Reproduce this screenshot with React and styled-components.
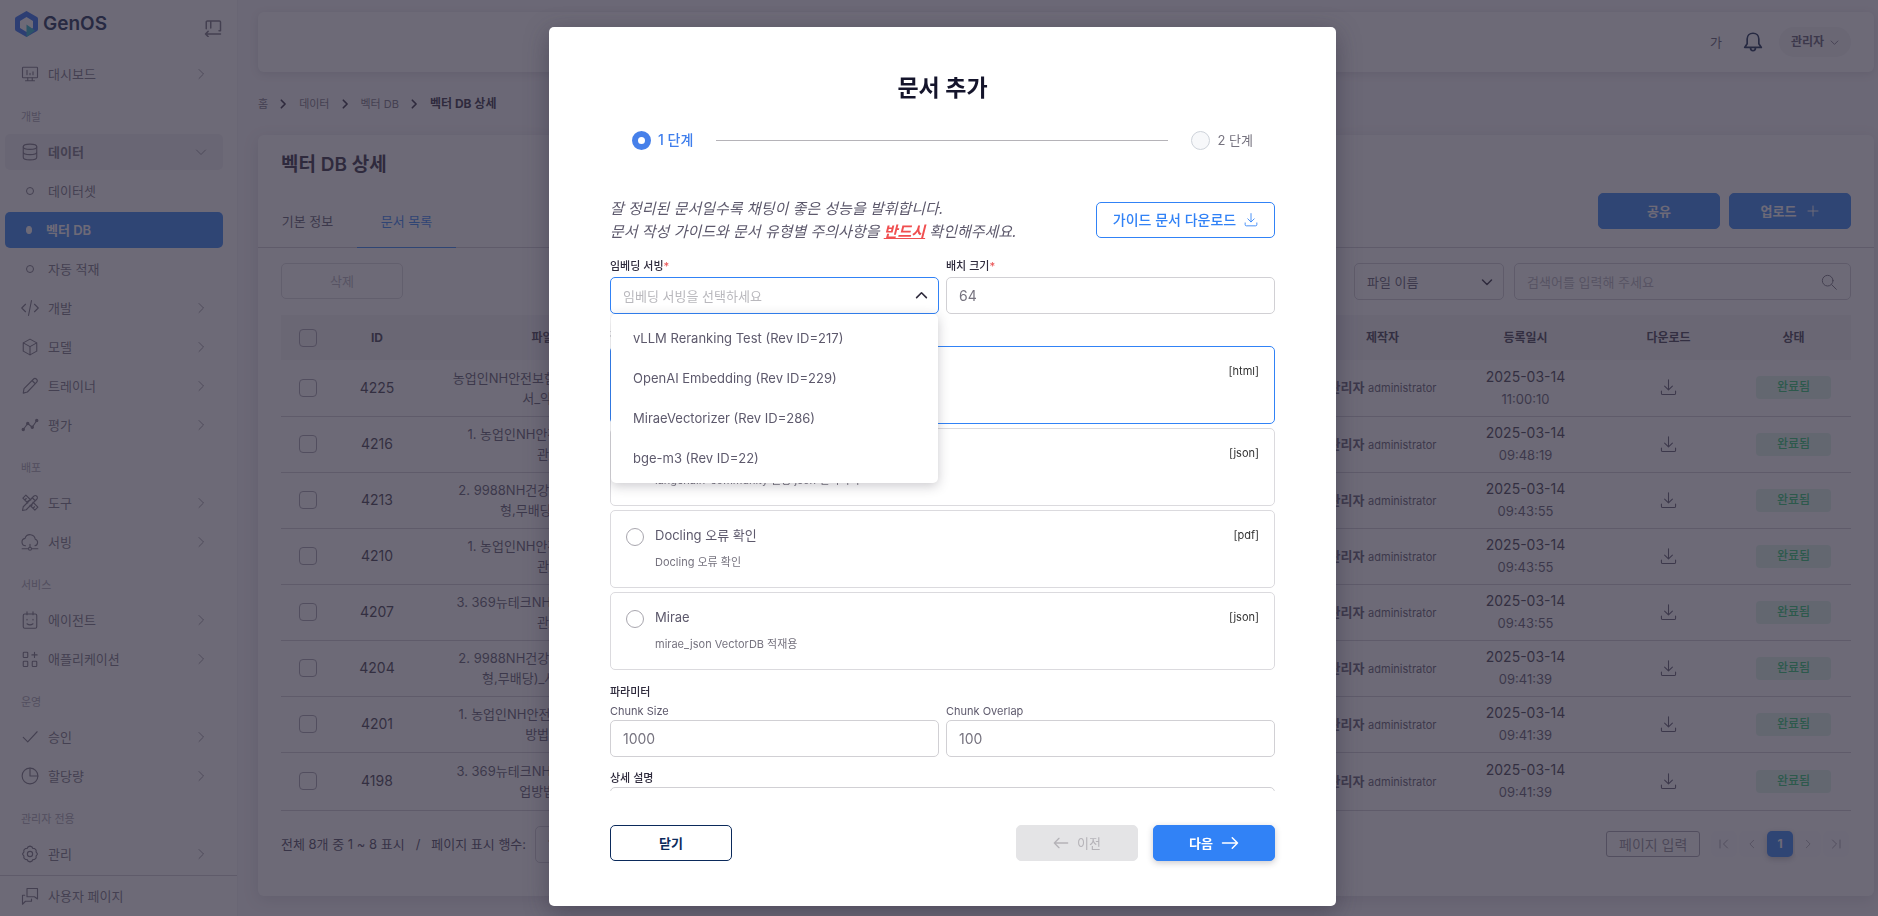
import React, { useState } from "react";
import styled, { createGlobalStyle } from "styled-components";

const GlobalStyle = createGlobalStyle`
  * {
    box-sizing: border-box;
  }
  body {
    margin: 0;
    background: #f8f7fa;
    color: #5d596c;
    font-family: Inter, "Noto Sans CJK KR", sans-serif;
    font-size: 13px;
    line-height: 20px;
  }
  button, input, select, textarea {
    font-family: inherit;
    font-size: 13px;
    line-height: 20px;
    color: inherit;
  }
  button {
    cursor: pointer;
  }
  a {
    color: inherit;
    text-decoration: none;
  }
  h1, h2, p, ul, ol, fieldset, legend {
    margin: 0;
    padding: 0;
    border: 0;
    list-style: none;
  }
`;

/* icons */

const Svg = styled.svg`
  flex: none;
  width: ${props => props.$size || 18}px;
  height: ${props => props.$size || 18}px;
  fill: none;
  stroke: currentColor;
  stroke-width: ${props => props.$stroke || 1.5};
  stroke-linecap: round;
  stroke-linejoin: round;
`;

const shapes = {
  dashboard: (
    <>
      <rect x="2" y="3" width="20" height="14" rx="1" />
      <path d="M9 17v4M15 17v4M6 21h12M8 7v6M12 11v2M16 9v4" />
    </>
  ),
  data: (
    <>
      <ellipse cx="12" cy="5" rx="9" ry="3.5" />
      <path d="M3 5v14c0 2 4 3.500 9 3.500s9-1.500 9-3.500V5M3 12c0 2 4 3.500 9 3.500s9-1.500 9-3.500" />
    </>
  ),
  code: <path d="M6 7l-5 5 5 5M18 7l5 5-5 5M14 2l-4 20" />,
  box: (
    <path d="M12 1.500l9 5v11l-9 5-9-5v-11zM3 6.500l9 5 9-5M12 11.500v11" />
  ),
  pencil: (
    <path d="M3 21.500l1-6L16.500 3a2.600 2.600 0 0 1 4.200 4.200L8.500 20zM15 5l4 4" />
  ),
  trend: (
    <>
      <path d="M3 18l6-8 6 5 6-9" />
      <g fill="currentColor">
        <circle cx="3" cy="18" r="1.500" />
        <circle cx="9" cy="10" r="1.500" />
        <circle cx="15" cy="15" r="1.500" />
        <circle cx="21" cy="6" r="1.500" />
      </g>
    </>
  ),
  tools: (
    <>
      <path d="M2 22l1-5L17 3a2.500 2.500 0 0 1 4 4L7 21zM15 5l4 4" />
      <path d="M9 12L2.500 5.500l4-4L13 8M16 11l6.500 6.500-4 4L12 15M5 8l2-2M8 11l2-2M16 19l2-2M13.500 16l1.500-1.500" />
    </>
  ),
  cloud: (
    <>
      <path d="M6 17a5 5 0 0 1-.6-9.900A7 7 0 0 1 19 8.300 4.500 4.500 0 0 1 18.500 17M12 15v4M1.500 21h8M14.500 21h8" />
      <circle cx="12" cy="21" r="2" />
    </>
  ),
  agent: (
    <>
      <rect x="3" y="4" width="18" height="19" rx="2" />
      <path d="M8 1v4M16 1v4M8 11v1M16 11v1M8 17q4 3 8 0" />
    </>
  ),
  apps: (
    <>
      <rect x="3" y="3" width="6" height="7" rx="1" />
      <rect x="3" y="15" width="6" height="7" rx="1" />
      <rect x="15" y="15" width="6" height="7" rx="1" />
      <path d="M18 3v7M14.500 6.500h7" />
    </>
  ),
  check: <path d="M3 12.500l6 6L21.500 5" />,
  pie: (
    <>
      <circle cx="12" cy="12" r="10.500" />
      <path d="M12 1.500V12h10.500" />
    </>
  ),
  gear: (
    <>
      <path d="M12 1.500l2.600 1 1.200 2 2.400.2 2 2-.1 2.500 1.900 2.800-1.900 2.800.1 2.500-2 2-2.400.2-1.200 2-2.600 1-2.600-1-1.200-2-2.400-.2-2-2 .1-2.500L2 12l1.900-2.800-.1-2.500 2-2 2.400-.2 1.200-2z" />
      <circle cx="12" cy="12" r="3.500" />
    </>
  ),
  chat: (
    <path d="M8 2h14v14l-4-3H8zM5 11H2v12l4-4h8v-3" />
  ),
  collapse: (
    <path d="M3 13V4a1.500 1.500 0 0 1 1.500-1.500h16A1.500 1.500 0 0 1 22 4v11.500h-2M9 3v9M22 20H2M5.500 16.500L2 20l3.500 3.500" />
  ),
  bell: (
    <path d="M12 1.500c-4 0-7 3-7 7V14l-3 4.500h20L19 14V8.500c0-4-3-7-7-7zM9 19c0 2 1 3.500 3 3.500s3-1.500 3-3.500" />
  ),
  download: <path d="M12 1v14M6.500 10l5.500 5.500L17.500 10M2 17v3a2 2 0 0 0 2 2h16a2 2 0 0 0 2-2v-3" />,
  right: <path d="M8 3l9 9-9 9" />,
  left: <path d="M16 3l-9 9 9 9" />,
  down: <path d="M3 8l9 9 9-9" />,
  up: <path d="M3 16l9-9 9 9" />,
  first: <path d="M4 4v16M19 4l-8 8 8 8" />,
  last: <path d="M20 4v16M5 4l8 8-8 8" />,
  plus: <path d="M12 2v20M2 12h20" />,
  search: (
    <>
      <circle cx="10" cy="10" r="8" />
      <path d="M16 16l7 7" />
    </>
  ),
  arrowRight: <path d="M2 12h20M15 5l7 7-7 7" />,
  arrowLeft: <path d="M22 12H2M9 5l-7 7 7 7" />
};

const Icon = ({ name, size, stroke, className }) => (
  <Svg
    viewBox="0 0 24 24"
    $size={size}
    $stroke={stroke}
    className={className}
    aria-hidden="true"
  >
    {shapes[name]}
  </Svg>
);

/* sidebar */

const Page = styled.div`
  display: flex;
  height: 100vh;
  overflow: hidden;
`;

const Sidebar = styled.aside`
  display: flex;
  flex-direction: column;
  width: 238px;
  flex: none;
  background: #fff;
  border-right: 1px solid #f1f0f3;
  color: #76737f;
`;

const Brand = styled.div`
  display: flex;
  align-items: flex-end;
  justify-content: space-between;
  height: 37px;
  padding: 0 15px;
`;

const Logo = styled.a`
  display: flex;
  align-items: center;
  gap: 5px;
  color: #14284f;
  font-size: 19px;
  line-height: 26px;
  font-weight: 600;
`;

const LogoMark = styled.svg`
  width: 23px;
  height: 26px;
`;

const IconButton = styled.button`
  display: flex;
  align-items: center;
  justify-content: center;
  padding: 0;
  border: 0;
  background: none;
`;

const Menu = styled.nav`
  display: flex;
  flex-direction: column;
  gap: 3px;
  flex: 1;
  padding: 19px 14px 0 5px;
`;

const MenuLabel = styled.span`
  padding: 14px 16px 6px;
  font-size: 11px;
  line-height: 16px;
  color: #a5a2ad;
`;

const MenuItem = styled.a`
  display: flex;
  align-items: center;
  gap: 9px;
  height: 36px;
  padding: 0 16px;
  border-radius: 5px;
  background: ${props =>
    props.$active ? "#3182f6" : props.$open ? "#f2f1f4" : "none"};
  color: ${props => (props.$active ? "#fff" : "inherit")};
  font-weight: ${props => (props.$active || props.$open ? 600 : 400)};
`;

const MenuText = styled.span`
  flex: 1;
`;

const Bullet = styled.span`
  width: ${props => (props.$filled ? 6 : 8)}px;
  height: 8px;
  margin: 0 5px;
  border-radius: 50%;
  border: 1px solid currentColor;
  background: ${props => (props.$filled ? "currentColor" : "none")};
`;

const UserPage = styled.a`
  display: flex;
  align-items: center;
  gap: 9px;
  height: 41px;
  padding: 0 21px;
  border-top: 1px solid #cfcdd4;
`;

/* content */

const Main = styled.main`
  flex: 1;
  min-width: 0;
  display: flex;
  flex-direction: column;
  padding: 12px 4px 20px 20px;
`;

const TopBar = styled.header`
  display: flex;
  align-items: center;
  justify-content: flex-end;
  gap: 21px;
  height: 60px;
  flex: none;
  padding: 0 23px;
  border-radius: 6px;
  background: #fff;
  box-shadow: 0 2px 8px rgba(47, 43, 61, 0.14);
`;

const TopActions = styled.div`
  display: flex;
  align-items: center;
  gap: 16px;
  color: #14284f;
`;

const UserButton = styled.button`
  display: flex;
  align-items: center;
  gap: 6px;
  height: 30px;
  padding: 0 12px;
  border: 0;
  border-radius: 15px;
  background: #f4f3f6;
  font-size: 12px;
  font-weight: 600;
  color: #5d596c;
`;

const Breadcrumb = styled.ol`
  display: flex;
  align-items: center;
  gap: 10px;
  height: 63px;
  font-size: 11px;
  color: #76737f;
`;

const Crumb = styled.li`
  display: flex;
  align-items: center;
  gap: 11px;
  &:last-child {
    font-size: 12px;
    font-weight: 700;
    color: #2f2b3d;
  }
`;

const CrumbIcon = styled(Icon)`
  color: #2f2b3d;
`;

const Card = styled.section`
  flex: 1;
  display: flex;
  flex-direction: column;
  border-radius: 6px;
  background: #fff;
  box-shadow: 0 4px 16px rgba(47, 43, 61, 0.14);
`;

const Title = styled.h1`
  padding: 16px 23px 0;
  font-size: 19px;
  line-height: 28px;
  font-weight: 600;
  color: #2f2b3d;
`;

const TabBar = styled.div`
  display: flex;
  align-items: flex-end;
  justify-content: space-between;
  height: 69px;
  border-bottom: 1px solid #cfcdd4;
`;

const Tabs = styled.div`
  display: flex;
`;

const Tab = styled.button`
  min-width: 99px;
  height: 54px;
  margin-bottom: -1px;
  padding: 0 23px;
  border: 0;
  border-bottom: 1px solid ${props => (props.$active ? "#3182f6" : "transparent")};
  background: none;
  color: ${props => (props.$active ? "#3182f6" : "#5d596c")};
`;

const Actions = styled.div`
  display: flex;
  gap: 9px;
  padding: 0 23px 18px;
`;

const Button = styled.button`
  display: flex;
  align-items: center;
  justify-content: center;
  gap: ${props => props.$gap || 8}px;
  width: 122px;
  height: 36px;
  border: 1px solid ${props => props.$border || "#3182f6"};
  border-radius: 5px;
  background: ${props => props.$bg || "#3182f6"};
  color: ${props => props.$color || "#fff"};
  font-weight: ${props => props.$weight || 600};
  box-shadow: ${props => (props.$raised ? "0 2px 6px rgba(47, 43, 61, 0.25)" : "none")};
`;

const Filters = styled.div`
  display: flex;
  gap: 10px;
  padding: 15px 23px;
`;

const Spacer = styled.span`
  flex: 1;
`;

const Picker = styled.span`
  display: flex;
  align-items: center;
  width: ${props => props.$width}px;
  height: 37px;
  border: 1px solid #cfcdd4;
  border-radius: 5px;
  padding-right: 10px;
  color: #2f2b3d;
`;

const Select = styled.select`
  flex: 1;
  min-width: 0;
  height: 100%;
  padding: 0 12px;
  border: 0;
  appearance: none;
  background: none;
  color: #5d596c;
`;

const SearchBox = styled(Picker)`
  padding-right: 13px;
  color: #76737f;
`;

const SearchInput = styled.input`
  flex: 1;
  min-width: 0;
  padding: 0 12px;
  border: 0;
  background: none;
  outline: none;
  &::placeholder {
    color: #b5b3bc;
  }
`;

const TableWrap = styled.div`
  padding: 0 23px;
`;

const Table = styled.table`
  width: 100%;
  table-layout: fixed;
  border-collapse: collapse;
  text-align: center;
`;

const Th = styled.th`
  width: ${props => (props.$width ? `${props.$width}px` : "auto")};
  height: 45px;
  padding: 0;
  background: #f4f3f6;
  font-size: 12px;
  font-weight: 700;
  color: #3f3b4c;
`;

const Tr = styled.tr`
  height: 56px;
  border-bottom: 1px solid #cfcdd4;
  &:last-child {
    height: 58px;
  }
`;

const Td = styled.td`
  padding: 0;
  white-space: pre-line;
`;

const Checkbox = styled.input`
  display: block;
  width: 18px;
  height: 18px;
  margin: 0 auto;
  appearance: none;
  border: 1px solid #a5a2ad;
  border-radius: 4px;
`;

const RowId = styled.span`
  font-size: 14px;
  color: #3f3b4c;
`;

const Login = styled.span`
  font-size: 11px;
`;

const DateText = styled.span`
  display: block;
  font-size: 14px;
  line-height: 22px;
  color: #3f3b4c;
`;

const TimeText = styled(DateText)`
  font-size: 13px;
  color: #5d596c;
`;

const DownloadButton = styled(IconButton)`
  margin: 0 auto;
`;

const Status = styled.span`
  display: inline-block;
  width: 75px;
  height: 23px;
  border-radius: 4px;
  background: #dcf6e8;
  color: #28c76f;
  font-size: 12px;
  line-height: 22px;
  font-weight: 500;
`;

const Footer = styled.div`
  display: flex;
  align-items: center;
  padding: 15px 25px 0 23px;
  color: #4b465c;
`;

const RowCount = styled.label`
  display: flex;
  align-items: center;
  gap: 9px;
`;

const Pager = styled.div`
  display: flex;
  align-items: center;
  gap: 2px;
`;

const PageInput = styled.input`
  width: 94px;
  height: 26px;
  margin-right: 9px;
  padding: 0 12px;
  border: 1px solid #a5a2ad;
  border-radius: 3px;
  background: none;
  font-size: 14px;
  &::placeholder {
    color: #8f8c98;
  }
`;

const PageButton = styled(IconButton)`
  width: 26px;
  height: 26px;
  border-radius: 5px;
  background: ${props => (props.$active ? "#3182f6" : "#fcfcfd")};
  color: ${props => (props.$active ? "#fff" : "#a5a2ad")};
  font-size: 12px;
  font-weight: 700;
  box-shadow: ${props => (props.$active ? "0 2px 6px rgba(47, 43, 61, 0.3)" : "none")};
`;

/* modal */

const Overlay = styled.div`
  position: fixed;
  inset: 0;
  display: flex;
  justify-content: center;
  padding: 27px 0 10px 7px;
  background: rgba(47, 43, 61, 0.7);
`;

const Modal = styled.div`
  display: flex;
  flex-direction: column;
  width: 100%;
  max-width: 787px;
  padding: 45px 61px;
  border-radius: 5px;
  background: #fff;
  box-shadow: 0 6px 24px rgba(47, 43, 61, 0.45);
`;

const ModalTitle = styled.h2`
  font-size: 23px;
  line-height: 32px;
  font-weight: 700;
  text-align: center;
  color: #14142b;
`;

const Steps = styled.ol`
  display: flex;
  align-items: center;
  gap: 23px;
  padding: 26px 22px 0;
`;

const Step = styled.li`
  display: flex;
  align-items: center;
  gap: 7px;
  font-size: ${props => (props.$active ? 14 : 13)}px;
  font-weight: ${props => (props.$active ? 500 : 400)};
  color: ${props => (props.$active ? "#3f7eec" : "#76737f")};
`;

const StepDot = styled.span`
  width: 19px;
  height: 19px;
  border-radius: 50%;
  border: ${props => (props.$active ? "6px solid #4680ea" : "1px solid #ced3da")};
  background: ${props => (props.$active ? "#fff" : "#f7f8fa")};
`;

const StepLine = styled.li`
  flex: 1;
  height: 1px;
  background: #b5b3b8;
`;

const Intro = styled.div`
  display: flex;
  align-items: center;
  justify-content: space-between;
  margin-top: 47px;
`;

const IntroText = styled.p`
  font-size: 15px;
  line-height: 23px;
  font-style: italic;
  color: #5d596c;
`;

const Must = styled.strong`
  font-weight: 700;
  color: #f04f50;
  text-decoration: underline;
`;

const GuideButton = styled(Button)`
  width: 179px;
  font-size: 14px;
`;

const Body = styled.div`
  flex: 1;
  min-height: 0;
  overflow: hidden;
  margin-top: 12px;
`;

const Fields = styled.div`
  display: grid;
  grid-template-columns: 1fr 1fr;
  gap: 7px;
`;

const Field = styled.div`
  position: relative;
`;

const Label = styled.label`
  display: block;
  font-size: 11px;
  line-height: ${props => (props.$short ? 18 : 22)}px;
  font-weight: ${props => (props.$plain ? 400 : 500)};
  color: ${props => (props.$plain ? "#5d596c" : "#2f2b3d")};
`;

const Legend = styled.legend`
  font-size: 11px;
  line-height: 20px;
  font-weight: 500;
  color: #2f2b3d;
`;

const Required = styled.span`
  color: #ea5455;
`;

const Control = styled.div`
  display: flex;
  align-items: center;
  height: 37px;
  padding-right: 10px;
  border: 1px solid ${props => (props.$focused ? "#3182f6" : "#d1d0d4")};
  border-radius: 5px;
  color: #2f2b3d;
`;

const Input = styled.input`
  flex: 1;
  min-width: 0;
  padding: 0 12px;
  border: 0;
  outline: none;
  background: none;
  font-size: ${props => (props.$list ? 13 : 14)}px;
  color: #76737f;
  &::placeholder {
    color: #b9b8bd;
  }
`;

const Options = styled.ul`
  position: absolute;
  z-index: 2;
  top: 100%;
  left: 1px;
  right: 1px;
  padding: 4px 0 5px;
  border-radius: 5px;
  background: #fff;
  box-shadow: 0 3px 12px rgba(47, 43, 61, 0.25);
`;

const Option = styled.li`
  padding: 0 22px;
  font-size: 13px;
  line-height: 40px;
  height: 40px;
  color: #5d596c;
`;

const Group = styled.fieldset`
  margin-top: 12px;
`;

const Choices = styled.div`
  display: grid;
  gap: 4px;
`;

const Choice = styled.label`
  display: flex;
  gap: 11px;
  height: 78px;
  padding: 14px 15px 0;
  border: 1px solid ${props => (props.$checked ? "#3182f6" : "#dbdade")};
  border-radius: 5px;
`;

const Radio = styled.input`
  width: 18px;
  height: 18px;
  margin: 3px 0 0;
  appearance: none;
  border: ${props => (props.checked ? "5px solid #3182f6" : "1px solid #a8a6ae")};
  border-radius: 50%;
`;

const ChoiceText = styled.span`
  flex: 1;
`;

const ChoiceName = styled.span`
  display: block;
  font-size: 13px;
  color: #5d596c;
`;

const ChoiceInfo = styled.span`
  display: block;
  padding-top: 7px;
  font-size: 11px;
  color: #76737f;
`;

const FileType = styled.span`
  font-size: 11px;
  color: #333;
`;

const Memo = styled.textarea`
  display: block;
  width: 100%;
  height: 96px;
  border: 1px solid #d1d0d4;
  border-radius: 5px;
  resize: none;
`;

const ModalFooter = styled.div`
  display: flex;
  gap: 15px;
  margin-top: 34px;
`;

const menu = [
  { icon: "dashboard", text: "대시보드" },
  { label: "개발" },
  { icon: "data", text: "데이터", open: true },
  { bullet: true, text: "데이터셋" },
  { bullet: true, text: "벡터 DB", active: true },
  { bullet: true, text: "자동 적재" },
  { icon: "code", text: "개발" },
  { icon: "box", text: "모델" },
  { icon: "pencil", text: "트레이너" },
  { icon: "trend", text: "평가" },
  { label: "배포" },
  { icon: "tools", text: "도구" },
  { icon: "cloud", text: "서빙" },
  { label: "서비스" },
  { icon: "agent", text: "에이전트" },
  { icon: "apps", text: "애플리케이션" },
  { label: "운영" },
  { icon: "check", text: "승인" },
  { icon: "pie", text: "할당량" },
  { label: "관리자 전용" },
  { icon: "gear", text: "관리" }
];

const rows = [
  { id: 4225, file: "농업인NH안전보험(무배당)_상품요\n서_약관_1", time: "11:00:10" },
  { id: 4216, file: "1. 농업인NH안전보험(무배당)\n관_1", time: "09:48:19" },
  { id: 4213, file: "2. 9988NH건강보험(간편심사유\n형,무배당)_약관_1", time: "09:43:55" },
  { id: 4210, file: "1. 농업인NH안전보험(무배당)\n관_1", time: "09:43:55" },
  { id: 4207, file: "3. 369뉴테크NH치매보험(무배당\n관_1", time: "09:43:55" },
  { id: 4204, file: "2. 9988NH건강보험(간편심사유\n형,무배당)_사업방법서_1", time: "09:41:39" },
  { id: 4201, file: "1. 농업인NH안전보험(무배당)_사\n방법서_1", time: "09:41:39" },
  { id: 4198, file: "3. 369뉴테크NH치매보험(무배당\n업방법서_1", time: "09:41:39" }
];

const servings = [
  "vLLM Reranking Test (Rev ID=217)",
  "OpenAI Embedding (Rev ID=229)",
  "MiraeVectorizer (Rev ID=286)",
  "bge-m3 (Rev ID=22)"
];

const processors = [
  { name: "HTML", info: "html 전처리기", type: "[html]" },
  { name: "JSON", info: "langchain-community 활용 json 전처리기", type: "[json]" },
  { name: "Docling 오류 확인", info: "Docling 오류 확인", type: "[pdf]" },
  { name: "Mirae", info: "mirae_json VectorDB 적재용", type: "[json]" }
];

const crumbs = ["홈", "데이터", "벡터 DB", "벡터 DB 상세"];

const SideMenu = () => (
  <Sidebar>
    <Brand>
      <Logo href="#">
        <LogoMark viewBox="0 0 23 26" aria-hidden="true">
          <path
            fill="#2a6cf0"
            fillRule="evenodd"
            d="M11.500 0L22 6q1 .6 1 2v10q0 1.400-1 2l-10.500 6L1 20q-1-.6-1-2V8q0-1.400 1-2zM11.500 6L5 10v7l6.500 4 6.500-4v-7z"
          />
          <path fill="#27b5c8" d="M11.500 13.500l8.500 6-8.500 6.500z" />
        </LogoMark>
        GenOS
      </Logo>
      <IconButton aria-label="메뉴 접기">
        <Icon name="collapse" size={18} stroke={2} />
      </IconButton>
    </Brand>
    <Menu>
      {menu.map(item =>
        item.label ? (
          <MenuLabel key={item.label}>{item.label}</MenuLabel>
        ) : (
          <MenuItem
            key={item.text + (item.icon || "")}
            href="#"
            $active={item.active}
            $open={item.open}
          >
            {item.bullet ? (
              <Bullet $filled={item.active} />
            ) : (
              <Icon name={item.icon} />
            )}
            <MenuText>{item.text}</MenuText>
            {!item.bullet && (
              <Icon name={item.open ? "down" : "right"} size={12} />
            )}
          </MenuItem>
        )
      )}
    </Menu>
    <UserPage href="#">
      <Icon name="chat" />
      사용자 페이지
    </UserPage>
  </Sidebar>
);

const DocumentTable = () => (
  <TableWrap>
    <Table>
      <thead>
        <tr>
          <Th $width={53}>
            <Checkbox type="checkbox" aria-label="전체 선택" />
          </Th>
          <Th $width={86}>ID</Th>
          <Th $width={256}>파일명</Th>
          <Th />
          <Th $width={135}>제작자</Th>
          <Th $width={151}>등록일시</Th>
          <Th $width={135}>다운로드</Th>
          <Th $width={115}>상태</Th>
        </tr>
      </thead>
      <tbody>
        {rows.map(row => (
          <Tr key={row.id}>
            <Td>
              <Checkbox type="checkbox" aria-label={`${row.id} 선택`} />
            </Td>
            <Td>
              <RowId>{row.id}</RowId>
            </Td>
            <Td>{row.file}</Td>
            <Td />
            <Td>
              <b>관리자</b> <Login>administrator</Login>
            </Td>
            <Td>
              <DateText>2025-03-14</DateText>
              <TimeText>{row.time}</TimeText>
            </Td>
            <Td>
              <DownloadButton aria-label={`${row.id} 다운로드`}>
                <Icon name="download" size={17} />
              </DownloadButton>
            </Td>
            <Td>
              <Status>완료됨</Status>
            </Td>
          </Tr>
        ))}
      </tbody>
    </Table>
  </TableWrap>
);

const AddDocument = () => {
  const [processor, setProcessor] = useState(0);
  return (
    <Overlay>
      <Modal role="dialog" aria-modal="true" aria-labelledby="modal-title">
        <ModalTitle id="modal-title">문서 추가</ModalTitle>
        <Steps>
          <Step $active>
            <StepDot $active />1 단계
          </Step>
          <StepLine aria-hidden="true" />
          <Step>
            <StepDot />2 단계
          </Step>
        </Steps>
        <Intro>
          <IntroText>
            잘 정리된 문서일수록 채팅이 좋은 성능을 발휘합니다.
            <br />
            문서 작성 가이드와 문서 유형별 주의사항을 <Must>반드시</Must>{" "}
            확인해주세요.
          </IntroText>
          <GuideButton $bg="#fff" $color="#3182f6" $weight={500}>
            가이드 문서 다운로드
            <Icon name="download" size={14} />
          </GuideButton>
        </Intro>
        <Body>
          <Fields>
            <Field>
              <Label htmlFor="serving">
                임베딩 서빙<Required>*</Required>
              </Label>
              <Control $focused>
                <Input
                  id="serving"
                  $list
                  role="combobox"
                  aria-expanded="true"
                  aria-controls="serving-list"
                  placeholder="임베딩 서빙을 선택하세요"
                />
                <Icon name="up" size={13} stroke={3} />
              </Control>
              <Options id="serving-list" role="listbox">
                {servings.map(name => (
                  <Option key={name} role="option">
                    {name}
                  </Option>
                ))}
              </Options>
            </Field>
            <Field>
              <Label htmlFor="batch">
                배치 크기<Required>*</Required>
              </Label>
              <Control>
                <Input id="batch" defaultValue="64" />
              </Control>
            </Field>
          </Fields>
          <Group>
            <Legend>
              전처리기<Required>*</Required>
            </Legend>
            <Choices>
              {processors.map((item, index) => (
                <Choice key={item.name} $checked={index === processor}>
                  <Radio
                    type="radio"
                    name="processor"
                    checked={index === processor}
                    onChange={() => setProcessor(index)}
                  />
                  <ChoiceText>
                    <ChoiceName>{item.name}</ChoiceName>
                    <ChoiceInfo>{item.info}</ChoiceInfo>
                  </ChoiceText>
                  <FileType>{item.type}</FileType>
                </Choice>
              ))}
            </Choices>
          </Group>
          <Group>
            <Legend>파라미터</Legend>
            <Fields>
              <Field>
                <Label htmlFor="chunk-size" $plain $short>
                  Chunk Size
                </Label>
                <Control>
                  <Input id="chunk-size" defaultValue="1000" />
                </Control>
              </Field>
              <Field>
                <Label htmlFor="chunk-overlap" $plain $short>
                  Chunk Overlap
                </Label>
                <Control>
                  <Input id="chunk-overlap" defaultValue="100" />
                </Control>
              </Field>
            </Fields>
          </Group>
          <Group>
            <Label htmlFor="memo" $short>
              상세 설명
            </Label>
            <Memo id="memo" />
          </Group>
        </Body>
        <ModalFooter>
          <Button $bg="#fff" $border="#0b2a5b" $color="#0b2a5b">
            닫기
          </Button>
          <Spacer />
          <Button disabled $bg="#e4e4e6" $border="#e4e4e6" $color="#b5b3b8" $weight={400}>
            <Icon name="arrowLeft" size={16} stroke={2} />
            이전
          </Button>
          <Button $raised>
            다음
            <Icon name="arrowRight" size={18} stroke={2} />
          </Button>
        </ModalFooter>
      </Modal>
    </Overlay>
  );
};

const App = () => (
  <>
    <GlobalStyle />
    <Page>
      <SideMenu />
      <Main>
        <TopBar>
          <span>가</span>
          <TopActions>
            <IconButton aria-label="알림">
              <Icon name="bell" size={20} stroke={2} />
            </IconButton>
            <UserButton>
              관리자
              <Icon name="down" size={9} stroke={2} />
            </UserButton>
          </TopActions>
        </TopBar>
        <Breadcrumb>
          {crumbs.map((crumb, index) => (
            <Crumb key={crumb}>
              {index > 0 && <CrumbIcon name="right" size={10} stroke={4} />}
              {crumb}
            </Crumb>
          ))}
        </Breadcrumb>
        <Card>
          <Title>벡터 DB 상세</Title>
          <TabBar>
            <Tabs>
              <Tab>기본 정보</Tab>
              <Tab $active>문서 목록</Tab>
            </Tabs>
            <Actions>
              <Button>공유</Button>
              <Button $gap={11}>
                업로드
                <Icon name="plus" size={12} stroke={2} />
              </Button>
            </Actions>
          </TabBar>
          <Filters>
            <Button disabled $bg="#fff" $border="#dbdade" $color="#b5b3bc" $weight={400}>
              삭제
            </Button>
            <Spacer />
            <Picker $width={150}>
              <Select aria-label="검색 조건">
                <option>파일 이름</option>
              </Select>
              <Icon name="down" size={12} stroke={3} />
            </Picker>
            <SearchBox $width={337}>
              <SearchInput aria-label="검색어" placeholder="검색어를 입력해 주세요" />
              <Icon name="search" size={16} />
            </SearchBox>
          </Filters>
          <DocumentTable />
          <Footer>
            <RowCount>
              <span>
                전체 8개 중 1 ~ 8 표시 &nbsp; / &nbsp; 페이지 표시 행수:
              </span>
              <Picker $width={80}>
                <Select>
                  <option>10</option>
                </Select>
              </Picker>
            </RowCount>
            <Spacer />
            <Pager>
              <PageInput aria-label="페이지 입력" placeholder="페이지 입력" />
              <PageButton aria-label="처음">
                <Icon name="first" size={12} stroke={2} />
              </PageButton>
              <PageButton aria-label="이전">
                <Icon name="left" size={10} stroke={2} />
              </PageButton>
              <PageButton $active>1</PageButton>
              <PageButton aria-label="다음">
                <Icon name="right" size={10} stroke={2} />
              </PageButton>
              <PageButton aria-label="마지막">
                <Icon name="last" size={12} stroke={2} />
              </PageButton>
            </Pager>
          </Footer>
        </Card>
      </Main>
    </Page>
    <AddDocument />
  </>
);

export default App;
